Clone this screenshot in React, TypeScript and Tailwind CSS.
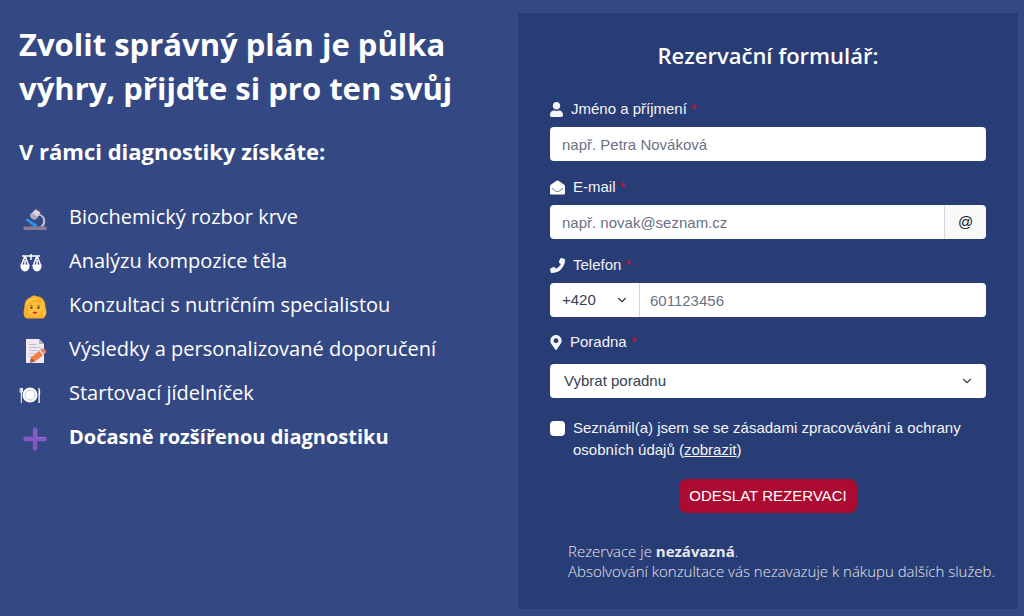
import React from 'react';
import { FaMapMarkerAlt, FaUser } from 'react-icons/fa';
import { FaPhone } from 'react-icons/fa6';
import { ChevronDown } from 'lucide-react';

const MicroscopeIcon = () => (
  <svg viewBox="0 0 24 24" className="size-6" aria-hidden="true">
    <path d="M14.5 7.500c4.500 0 6.700 3.500 6.700 7 0 2.600-1.500 4.400-3.200 5.500" fill="none" stroke="#c4bccd" strokeWidth="2.200" />
    <path d="M2.500 12.800l1.800-1.300 10.200 6.300-1 2.200H11z" fill="#2f8fe6" />
    <path d="M7.300 7.500l5.500-5.300 4.700 3.400-4.300 6.500c-2 1.600-6.800-1.400-5.900-4.600z" fill="#d9d3de" />
    <path d="M7.300 7.500l1.500-1.500 5.800 4-1.400 2.100c-2.300 1.400-6.800-1.400-5.900-4.600z" fill="#b0a5b8" />
    <path d="M13.800 1.200l1.600-1 2.500 1.900-.6 2.200z" fill="#5d4b57" />
    <path d="M1 19.500h21.500c.6 0 1 .5 1 1V23H.5v-2.500c0-.6.200-1 .5-1z" fill="#8d7b96" />
  </svg>
);

const ScalesIcon = () => (
  <svg viewBox="0 0 22 20" className="h-5 w-6" aria-hidden="true">
    <g fill="none" stroke="#fff" strokeWidth="1.500">
      <path d="M2 3h18M11 1v6M5 3L1.500 12M5 3l3.500 9M17 3l-3.500 9M17 3l3.500 9" />
    </g>
    <path d="M.5 11.500h9c.4 4-1.800 7-4.500 7s-4.900-3-4.500-7zM12.500 11.500h9c.4 4-1.800 7-4.500 7s-4.900-3-4.500-7z" fill="#fff" />
    <path d="M5 7v5M17 7v5" stroke="#fff" strokeWidth="1.500" />
  </svg>
);

const WomanIcon = () => (
  <svg viewBox="0 0 24 24" className="size-6" aria-hidden="true">
    <path d="M2 8C3 4 6 3 8 2c1-1.500 4-2 6-.8 4 .3 7 2.800 7.800 6.300 1 2.500.2 4 1.200 6.500 1.200 4-.2 8-3 9.500H4c-3.200-1-4-5-3-9C1.800 12 1 10.500 2 8z" fill="#f9b02a" />
    <path d="M5 10c3-.2 6.500-2 8-3.800 1 2.200 3.500 3.500 6 4.300.5 5.500-1.800 10.500-7 10.500S4.400 16 5 10z" fill="#ffc23d" />
    <path d="M4 9c2-4 5-6 10-5M19 7c2 4 1 9 2.500 13" fill="none" stroke="#ffd04f" strokeWidth="1.500" />
    <circle cx="8.500" cy="12.800" r="1.200" fill="#59413d" />
    <circle cx="15.500" cy="12.800" r="1.200" fill="#59413d" />
    <path d="M6.800 10.800q1.500-1 3 0M14 10.800q1.500-1 3 0" fill="none" stroke="#9b5a24" strokeWidth=".8" />
    <path d="M9.300 17.200q2.700-1 5.400 0-2.700 3.400-5.400 0z" fill="#d7263d" />
  </svg>
);

const MemoIcon = () => (
  <svg viewBox="0 0 24 24" className="size-6" aria-hidden="true">
    <path d="M3 0h13l5 5v19H3z" fill="#eee8f3" />
    <path d="M16 0l5 5h-5z" fill="#b8a9c6" />
    <path d="M6 5.500h7M6 8.500h12M6 11.500h9M6 14.500h6M6 17.500h4" stroke="#c5bdd0" strokeWidth="1" />
    <path d="M8 18.500l9-7.500 4 4.500-9 7-4.500 1.200z" fill="#f37f45" />
    <path d="M8 18.500l4 4-4.800 1.300z" fill="#a55b4a" />
    <path d="M16 12l1.300-1.200 4 4.500-1.300 1z" fill="#ded6e8" />
    <path d="M17.300 10.800l1.500-1.200c2-1 5.300 2 4.200 4l-1.700 1.700z" fill="#f27a62" />
  </svg>
);

const PlateIcon = () => (
  <svg viewBox="0 0 22 18" className="h-[18px] w-[22px]" aria-hidden="true">
    <circle cx="11" cy="9" r="7.500" fill="#fff" />
    <circle cx="11" cy="9" r="5" fill="none" stroke="#b3bbd2" strokeWidth=".8" />
    <path d="M1.200 2v4q1 1.500 2.200 0V2M2.300 2v15" fill="none" stroke="#fff" strokeWidth="1" />
    <path d="M20 1.500c1.500 2 1.500 6 .8 8V17h-1.300V2z" fill="#fff" />
  </svg>
);

const PlusIcon = () => (
  <svg viewBox="0 0 24 24" className="size-6" aria-hidden="true">
    <path d="M12 2.500v19M2.500 12h19" stroke="#8158c5" strokeWidth="4.400" strokeLinecap="round" />
    <path d="M13.500 2.500v8h8" fill="none" stroke="#9273d0" strokeWidth="1" strokeLinecap="round" />
  </svg>
);

const EnvelopeIcon = () => (
  <svg viewBox="0 0 16 16" className="size-[15px]" aria-hidden="true">
    <path d="M8 .5c.5 0 1 .2 1.400.5l5.800 4c.5.400.8.900.8 1.500V14c0 .9-.7 1.500-1.500 1.500h-13C.7 15.500 0 14.900 0 14V6.500c0-.6.300-1.100.8-1.500l5.800-4C7 .7 7.500.500 8 .5z" fill="#fff" />
    <path d="M2.200 8.800l3.800 3q2 1.300 4 0l3.800-3" fill="none" stroke="#5b6a98" strokeWidth="1" />
  </svg>
);

const Required = () => <span className="text-[#c8102e]">*</span>;

const App: React.FC = () => {
  const benefits = [
    { text: 'Biochemický rozbor krve', icon: <MicroscopeIcon />, emoji: true },
    { text: 'Analýzu kompozice těla', icon: <ScalesIcon />, emoji: false },
    { text: 'Konzultaci s nutričním specialistou', icon: <WomanIcon />, emoji: true },
    { text: 'Výsledky a personalizované doporučení', icon: <MemoIcon />, emoji: true },
    { text: 'Startovací jídelníček', icon: <PlateIcon />, emoji: false },
    { text: 'Dočasně rozšířenou diagnostiku', icon: <PlusIcon />, emoji: true, bold: true },
  ];

  const labelClass = "flex h-6 items-center gap-2 text-[15px] text-gray-100";
  const inputClass = "h-[34px] w-full min-w-0 bg-white px-3 text-[15px] text-gray-700 placeholder:text-gray-500";

  return (
    <main className="grid min-h-screen grid-cols-[518fr_506fr] bg-[#344983] font-['Open_Sans',sans-serif] text-white">
      <section className="pt-[22px] pr-12 pl-[19px]">
        <h1 className="text-[31px] leading-[44px] font-bold">Zvolit správný plán je půlka výhry, přijďte si pro ten svůj</h1>
        <h2 className="mt-7 text-[22px] leading-[26px] font-bold">V rámci diagnostiky získáte:</h2>
        <ul className="mt-[31px]">
          {benefits.map((item) => (
            <li key={item.text} className="flex h-11 items-center">
              <span className={item.emoji ? "w-[50px] pt-1 pl-1" : "w-[50px] pt-1"}>{item.icon}</span>
              <span className={item.bold ? "text-xl font-bold" : "text-xl"}>{item.text}</span>
            </li>
          ))}
        </ul>
      </section>

      <section className="mt-[13px] mr-[6px] mb-[7px] rounded-xs bg-[#283c75] px-8 pt-7">
        <h2 className="text-center text-[22px] leading-7 font-semibold">Rezervační formulář:</h2>
        <form className="mt-7 font-['Liberation_Sans',Arial,sans-serif]" onSubmit={(e) => e.preventDefault()}>
          <div>
            <label htmlFor="name" className={labelClass}>
              <FaUser size={15} className="w-[13px]" />
              <span>Jméno a příjmení <Required /></span>
            </label>
            <input id="name" type="text" placeholder="např. Petra Nováková" className={`${inputClass} mt-[6px] rounded-sm`} />
          </div>

          <div className="mt-[14px]">
            <label htmlFor="email" className={labelClass}>
              <EnvelopeIcon />
              <span>E-mail <Required /></span>
            </label>
            <div className="mt-[6px] flex overflow-hidden rounded-sm">
              <input id="email" type="email" placeholder="např. novak@seznam.cz" className={inputClass} />
              <span className="flex w-[42px] shrink-0 items-center justify-center border-l border-gray-300 bg-[#f8f8f6] text-[15px] text-gray-900">@</span>
            </div>
          </div>

          <div className="mt-[14px]">
            <label htmlFor="phone" className={labelClass}>
              <FaPhone size={15} className="-scale-x-100" />
              <span>Telefon <Required /></span>
            </label>
            <div className="mt-[6px] flex overflow-hidden rounded-sm">
              <div className="relative w-[90px] shrink-0 border-r border-gray-300">
                <select aria-label="+420" className={`${inputClass} appearance-none`}>
                  <option>+420</option>
                </select>
                <ChevronDown size={14} className="pointer-events-none absolute top-[10px] right-[10px] text-gray-700" />
              </div>
              <input id="phone" type="tel" placeholder="601123456" className="h-[34px] w-full min-w-0 bg-white px-[10px] text-[15px] text-gray-700 placeholder:text-gray-500" />
            </div>
          </div>

          <div className="mt-[13px]">
            <label htmlFor="clinic" className={labelClass}>
              <FaMapMarkerAlt size={15} className="w-3" />
              <span>Poradna <Required /></span>
            </label>
            <div className="relative mt-[10px]">
              <select id="clinic" className="h-[34px] w-full appearance-none rounded-sm bg-white px-[14px] text-[15px] text-gray-700">
                <option>Vybrat poradnu</option>
              </select>
              <ChevronDown size={14} className="pointer-events-none absolute top-[10px] right-3 text-gray-700" />
            </div>
          </div>

          <div className="mt-[19px] flex gap-2">
            <input id="consent" type="checkbox" className="mt-1 size-[15px] shrink-0 appearance-none rounded-sm bg-white checked:bg-blue-600" />
            <label htmlFor="consent" className="text-[15px] leading-[22px] text-gray-100">
              Seznámil(a) jsem se se zásadami zpracovávání a ochrany osobních údajů (<a href="#zasady" className="underline">zobrazit</a>)
            </label>
          </div>

          <div className="mt-[18px] text-center">
            <button type="submit" className="h-[34px] rounded-lg bg-[#ab0a31] px-[10px] text-[15px] text-white">ODESLAT REZERVACI</button>
          </div>
        </form>
        <p className="mt-7 -mr-7 ml-[18px] text-[15px] leading-5 font-light text-gray-200">
          Rezervace je <strong className="font-bold">nezávazná</strong>.<br />
          Absolvování konzultace vás nezavazuje k nákupu dalších služeb.
        </p>
      </section>
    </main>
  );
};

export default App;
